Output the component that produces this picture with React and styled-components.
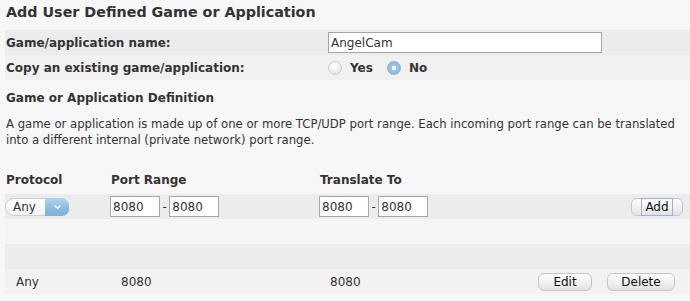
import React from "react";
import styled, { createGlobalStyle } from "styled-components";

const GlobalStyle = createGlobalStyle`
  html, body {
    margin: 0;
    padding: 0;
    background: #f7f7f7;
  }
  body {
    font-family: "DejaVu Sans", Verdana, sans-serif;
    color: #333;
  }
`;

const Page = styled.div`
  width: 690px;
  height: 301px;
  overflow: hidden;
  padding-left: 5px;
  box-sizing: border-box;
  background: #f7f7f7;
`;

const Title = styled.h1`
  margin: 0;
  height: 30px;
  padding: 3px 0 0 1px;
  box-sizing: border-box;
  font-size: 14.3px;
  font-weight: bold;
  line-height: 18px;
`;

const FormRow = styled.div`
  display: grid;
  grid-template-columns: 323px 1fr;
  align-items: center;
  height: 25px;
  background: ${(p) => (p.$alt ? "#f1f1f1" : "#ececec")};
`;

const Label = styled.span`
  padding-left: 1px;
  font-size: 12px;
  font-weight: bold;
`;

const TextInput = styled.input`
  box-sizing: border-box;
  width: ${(p) => p.$w || 50}px;
  height: 21px;
  border: 1px solid #a6a6a6;
  background: #fff;
  padding: 0 2px;
  margin: 0;
  font-family: "DejaVu Sans", Verdana, sans-serif;
  font-size: 12px;
  color: #333;
  outline: none;
`;

const RadioGroup = styled.div`
  display: flex;
  align-items: center;
  gap: 8px;
  font-size: 12px;
  font-weight: bold;
`;

const RadioDot = styled.span`
  display: inline-block;
  box-sizing: border-box;
  width: 14px;
  height: 14px;
  border-radius: 50%;
  border: 1px solid ${(p) => (p.$on ? "#8cb8da" : "#d2d2d2")};
  background: ${(p) =>
    p.$on
      ? "radial-gradient(circle at 50% 50%, #f2f8fc 0 2px, #9fc6e4 2.5px, #7fb1d9 100%)"
      : "radial-gradient(circle at 45% 35%, #ffffff 0, #f2f2f2 40%, #d8d8d8 100%)"};
  margin-left: ${(p) => (p.$first ? 0 : 6)}px;
`;

const SectionTitle = styled.h2`
  margin: 0;
  height: 35px;
  padding: 10px 0 0 1px;
  box-sizing: border-box;
  font-size: 12px;
  font-weight: bold;
  line-height: 16px;
`;

const Description = styled.p`
  margin: 0;
  padding: 1px 0 0 1px;
  height: 51px;
  box-sizing: border-box;
  font-size: 11.65px;
  line-height: 16px;
  white-space: nowrap;
`;

const Grid = styled.div`
  display: grid;
  grid-template-columns: 105px 209px 1fr auto;
  align-items: center;
  height: ${(p) => p.$h || 25}px;
  background: ${(p) => p.$bg || "transparent"};
  padding-right: ${(p) => p.$pr || 0}px;
`;

const HeadCell = styled.span`
  padding-left: 1px;
  font-size: 12px;
  font-weight: bold;
`;

const Cell = styled.span`
  padding-left: 11px;
  font-size: 12px;
`;

const Range = styled.div`
  display: flex;
  align-items: center;
  gap: 2.5px;
  font-size: 12px;
`;

const Select = styled.div`
  display: flex;
  width: 64px;
  height: 18px;
  font-size: 12px;
`;

const SelectValue = styled.span`
  flex: 1;
  display: flex;
  align-items: center;
  padding-left: 7px;
  background: linear-gradient(#ffffff, #f3f3f3);
  border: 1px solid #cfcfcf;
  border-right: none;
  border-radius: 9px 0 0 9px;
  color: #333;
`;

const SelectArrow = styled.span`
  width: 24px;
  display: flex;
  align-items: center;
  justify-content: center;
  background: linear-gradient(#b6d4ea, #8dbbe0 55%, #7fb0d8);
  border-radius: 0 7px 7px 0;
`;

const Button = styled.button`
  box-sizing: border-box;
  width: ${(p) => p.$w}px;
  height: 18px;
  padding: 0;
  border: 1px solid #c6c6c6;
  border-radius: 6px;
  background: linear-gradient(#fefefe, #f2f2f2 50%, #e2e2e2);
  font-family: "DejaVu Sans", Verdana, sans-serif;
  font-size: 12px;
  color: #111;
  display: flex;
  align-items: center;
  justify-content: center;
`;

const Focus = styled.span`
  box-sizing: border-box;
  height: 18px;
  padding: 0 3px;
  border: 1px solid #8eb4f0;
  display: flex;
  align-items: center;
`;

const Actions = styled.div`
  display: flex;
  gap: 15px;
`;

function Chevron() {
  return (
    <svg width="9" height="6" viewBox="0 0 9 6">
      <path d="M1.5 1.5 L4.5 4.2 L7.5 1.5" fill="none" stroke="#fff" strokeWidth="1.4" />
    </svg>
  );
}

export default function App() {
  return (
    <Page>
      <GlobalStyle />
      <Title>Add User Defined Game or Application</Title>
      <FormRow>
        <Label>Game/application name:</Label>
        <TextInput $w={274} defaultValue="AngelCam" />
      </FormRow>
      <FormRow $alt>
        <Label>Copy an existing game/application:</Label>
        <RadioGroup>
          <RadioDot $first />
          <span>Yes</span>
          <RadioDot $on />
          <span>No</span>
        </RadioGroup>
      </FormRow>

      <SectionTitle>Game or Application Definition</SectionTitle>
      <Description>
        A game or application is made up of one or more TCP/UDP port range. Each incoming port range can be translated
        <br />
        into a different internal (private network) port range.
      </Description>

      <Grid $h={28}>
        <HeadCell>Protocol</HeadCell>
        <HeadCell>Port Range</HeadCell>
        <HeadCell>Translate To</HeadCell>
        <span />
      </Grid>
      <Grid $bg="#ececec" $pr={7}>
        <Select>
          <SelectValue>Any</SelectValue>
          <SelectArrow>
            <Chevron />
          </SelectArrow>
        </Select>
        <Range>
          <TextInput defaultValue="8080" />
          <span>-</span>
          <TextInput defaultValue="8080" />
        </Range>
        <Range>
          <TextInput defaultValue="8080" />
          <span>-</span>
          <TextInput defaultValue="8080" />
        </Range>
        <Button $w={52}>
          <Focus>Add</Focus>
        </Button>
      </Grid>
      <Grid $bg="#f5f5f5" />
      <Grid $bg="#ececec" />
      <Grid $bg="#f2f2f2" $pr={15}>
        <Cell>Any</Cell>
        <Cell>8080</Cell>
        <Cell>8080</Cell>
        <Actions>
          <Button $w={54}>Edit</Button>
          <Button $w={68}>Delete</Button>
        </Actions>
      </Grid>
    </Page>
  );
}
